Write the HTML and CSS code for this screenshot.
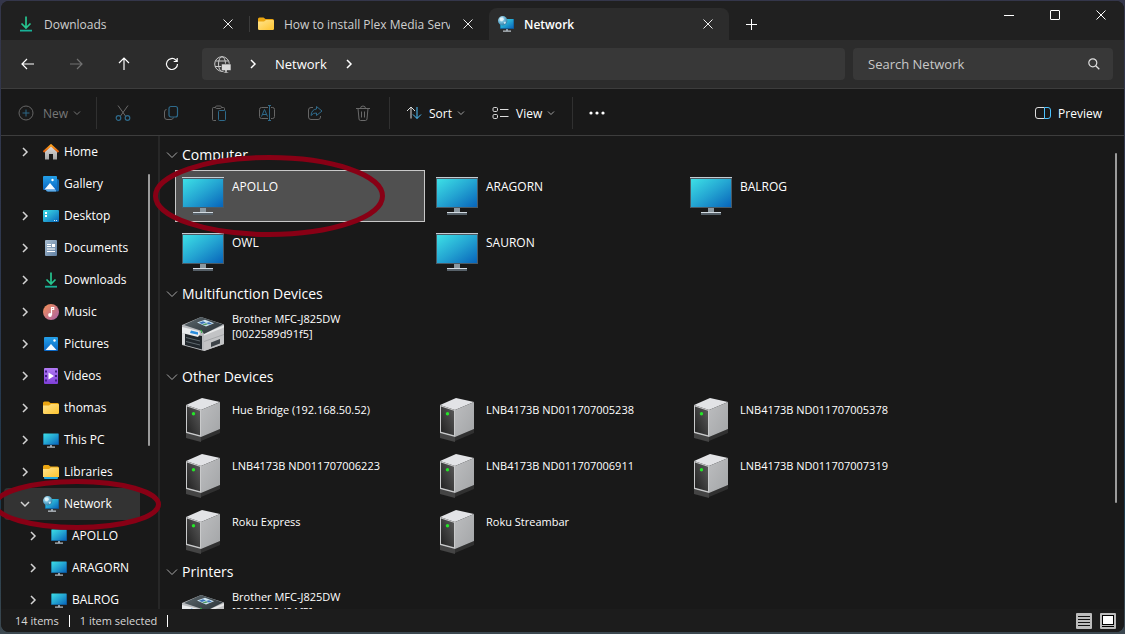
FILE: index.html
```html
<!DOCTYPE html>
<html lang="en">
<head>
<meta charset="utf-8">
<title>Network</title>
<link rel="stylesheet" href="styles.css">
</head>
<body>
<svg class="defs" aria-hidden="true">
  <defs>
    <linearGradient id="screen" x1="0" y1="0" x2="1" y2="1"><stop offset="0" stop-color="#3de0e6"/><stop offset=".5" stop-color="#24a5d2"/><stop offset="1" stop-color="#0864ba"/></linearGradient>
    <linearGradient id="gold" x1="0" y1="0" x2="1" y2="1"><stop offset="0" stop-color="#ffe48e"/><stop offset="1" stop-color="#fec42f"/></linearGradient>
    <linearGradient id="blue" x1="0" y1="0" x2="0" y2="1"><stop offset="0" stop-color="#24a0e8"/><stop offset="1" stop-color="#0a66c4"/></linearGradient>
    <linearGradient id="doc" x1="0" y1="0" x2="1" y2="1"><stop offset="0" stop-color="#a9bdd0"/><stop offset="1" stop-color="#5f7fa2"/></linearGradient>
    <linearGradient id="wall" x1="0" y1="0" x2="0" y2="1"><stop offset="0" stop-color="#e2e2e2"/><stop offset="1" stop-color="#a5a5a5"/></linearGradient>
    <linearGradient id="roof" x1="0" y1="0" x2="0" y2="1"><stop offset="0" stop-color="#ffa31f"/><stop offset="1" stop-color="#dc5a0c"/></linearGradient>
    <linearGradient id="disc" x1="0" y1="0" x2="1" y2="1"><stop offset="0" stop-color="#f49255"/><stop offset="1" stop-color="#a95fa8"/></linearGradient>
    <linearGradient id="film" x1="0" y1="0" x2="0" y2="1"><stop offset="0" stop-color="#b27af5"/><stop offset="1" stop-color="#7f3fd8"/></linearGradient>
    <radialGradient id="globe" cx=".35" cy=".3" r=".8"><stop offset="0" stop-color="#d5f1fa"/><stop offset=".5" stop-color="#69b3d4"/><stop offset="1" stop-color="#28719c"/></radialGradient>
    <linearGradient id="front" x1="0" y1="1" x2="1" y2="0"><stop offset="0" stop-color="#202020"/><stop offset="1" stop-color="#5b5b5b"/></linearGradient>
    <linearGradient id="side" x1="0" y1="0" x2="1" y2="1"><stop offset="0" stop-color="#bcbdbf"/><stop offset="1" stop-color="#a3a5a7"/></linearGradient>
    <linearGradient id="lid" x1="0" y1="0" x2="1" y2="1"><stop offset="0" stop-color="#5d686e"/><stop offset="1" stop-color="#262e33"/></linearGradient>
  </defs>
  <symbol id="i-x" viewBox="0 0 10 10"><path d="M.5.5l9 9M9.500.5l-9 9" stroke="currentColor" fill="none"/></symbol>
  <symbol id="i-chev-r" viewBox="0 0 8 10"><path d="M2 1l4 4-4 4" stroke="currentColor" stroke-width="1.500" fill="none"/></symbol>
  <symbol id="i-chev-d" viewBox="0 0 10 8"><path d="M1 2l4 4 4-4" stroke="currentColor" stroke-width="1.500" fill="none"/></symbol>
  <symbol id="i-chev-s" viewBox="0 0 8 6"><path d="M1 1.500l3 3 3-3" stroke="currentColor" fill="none"/></symbol>
  <symbol id="i-chev-g" viewBox="0 0 12 8"><path d="M1 1.500l5 5 5-5" stroke="currentColor" fill="none"/></symbol>
  <symbol id="i-down" viewBox="0 0 16 16"><path d="M8 .5v11M3.500 7.500L8 12l4.500-4.500" stroke="#26c690" stroke-width="1.700" fill="none"/><path d="M2 14.700h12" stroke="#18b197" stroke-width="1.800"/></symbol>
  <symbol id="i-folder" viewBox="0 0 16 16"><path d="M0 3q0-1.500 1.500-1.500h4L7.500 3H14.500Q16 3 16 4.500V8H0z" fill="#eaa511"/><path d="M0 5.500h6L8 4h6.700Q16 4 16 5.300v7.400q0 1.300-1.300 1.300H1.300Q0 14 0 12.700z" fill="url(#gold)"/></symbol>
  <symbol id="i-lib" viewBox="0 0 16 16"><path d="M0 2.500Q0 1 1.500 1h4L7.500 2.500H14.500Q16 2.500 16 4v3H0z" fill="#eaa511"/><path d="M0 5h6l2-1.500h6.700Q16 3.500 16 4.800V13H0z" fill="url(#gold)"/><path d="M1 13h14v1q0 1-1 1H2q-1 0-1-1z" fill="#22a5e0"/></symbol>
  <symbol id="i-pc" viewBox="0 0 16 16"><path d="M0 2h16v11H0z" fill="#147"/><path d="M.5 1.500h15v11H.5z" fill="url(#screen)"/><path d="M7 13h2v2H7z" fill="#8b98a4"/><path d="M4 14.500h8v1.200H4z" fill="#bcc4ca"/></symbol>
  <symbol id="i-net" viewBox="0 0 16 16"><path d="M2 3h14v10H2z" fill="#124f83"/><path d="M2.500 3h13v9.300h-13z" fill="url(#screen)"/><path d="M8 13h2v2H8z" fill="#8b98a4"/><path d="M5 14.500h8v1.300H5z" fill="#bcc4ca"/><circle cx="4.700" cy="4.700" r="4.700" fill="url(#globe)"/><path d="M2 2l3-.5 1 2-2 2-2-1zM5.500 6l2-.5.500 1.500-1.500 1.200z" fill="#eefafd" opacity=".75"/></symbol>
  <symbol id="i-home" viewBox="0 0 16 16"><path d="M2 7l6-6 6 6v8.500h-4V10H6v5.500H2z" fill="url(#wall)"/><path d="M.5 8L8 1.200 15.500 8" stroke="url(#roof)" stroke-width="2" fill="none"/></symbol>
  <symbol id="i-gallery" viewBox="0 0 16 16"><path d="M4 3h10.500q1.500 0 1.500 1.500V14q0 1.500-1.500 1.500H5Q3 15.500 3 14z" fill="#1468ae"/><path d="M3 13h10v2.500H5q-2 0-2-2z" fill="#5fabe6"/><rect width="14" height="14" rx="1" fill="url(#blue)"/><path d="M1.500 13.500L7 7l5.500 6.500z" fill="#f4faff"/><circle cx="9.500" cy="4" r="1.200" fill="#fff"/></symbol>
  <symbol id="i-desk" viewBox="0 0 16 16"><rect y="2" width="16" height="12" rx="1" fill="url(#screen)"/><path d="M2 4h2v2H2zM2 7h2v2H2z" fill="#fff"/><path d="M11 12h1v1h-1zM13 12h1v1h-1z" fill="#d8f3ff"/></symbol>
  <symbol id="i-doc" viewBox="0 0 16 16"><rect x="2" y="0" width="12" height="16" rx="1" fill="url(#doc)"/><path d="M4 4.500h4M4 6.500h4M4 9h8M4 11.500h8" stroke="#fff" stroke-width="1.200"/><path d="M9 4h3v3H9z" fill="#fff"/></symbol>
  <symbol id="i-music" viewBox="0 0 16 16"><circle cx="8" cy="8" r="8" fill="url(#disc)"/><path d="M8.500 11V3.500h2.200v2H8.500" stroke="#fff" stroke-width="1.200" fill="none"/><circle cx="7" cy="11" r="1.900" fill="#fff"/></symbol>
  <symbol id="i-pic" viewBox="0 0 16 16"><rect x="1" y="1" width="14" height="14" rx="1" fill="url(#blue)"/><path d="M2.500 14L8 8l5.500 6z" fill="#f4faff"/><circle cx="11.500" cy="4.500" r="1.200" fill="#fff"/></symbol>
  <symbol id="i-video" viewBox="0 0 16 16"><rect x="1" y="0" width="14" height="16" rx="1" fill="url(#film)"/><path d="M3 2.500v11.500M13 2.500v11.500" stroke="#42208a" stroke-width="2" stroke-dasharray="2 2.500"/><path d="M5.500 4.500l5.500 3.500-5.500 3.500z" fill="#fff"/></symbol>
  <symbol id="i-monitor" viewBox="0 0 42 42"><path d="M0 3h42v31H0z" fill="#4b5a64"/><path d="M0 3h42v1H0z" fill="#c4ccd3"/><path d="M1 5h40v28H1z" fill="url(#screen)"/><path d="M18 34h6v4h-6z" fill="#8b979f"/><path d="M11 38h20v1H11z" fill="#d2dbe2"/><path d="M11 39h20v2H11z" fill="#566068"/></symbol>
  <symbol id="i-server" viewBox="0 0 42 46"><path d="M4 37l15 4v5L4 42z" fill="#444"/><path d="M19 41l19-8v4l-19 8z" fill="#303030"/><path d="M4 9L20 2l18 4-19 8z" fill="#e2e3e6"/><path d="M19 14L38 6v27l-19 8z" fill="url(#side)"/><path d="M4 9l15 5v27L4 37z" fill="#c9cacb"/><path d="M5 10.500l13 4.300v24.500L5 35.800z" fill="url(#front)"/><circle cx="11.500" cy="17.700" r="1.700" fill="#25e628"/></symbol>
  <symbol id="i-printer" viewBox="0 0 42 42">
    <path d="M0 12L19 4l23 7.500V31l-20 7L0 32z" fill="#b9bbbe"/>
    <path d="M22 20.500l20-8V31l-20 7z" fill="#c2c3c5"/>
    <path d="M22 20.500l20-8v2l-20 8z" fill="#e6e7e8"/>
    <path d="M22 28.500l20-7" stroke="#9a9c9f" stroke-width=".7"/>
    <path d="M2 12L19 4l22 7.500L22 21l-2-3z" fill="url(#lid)"/>
    <path d="M15 9.500l8-2.800 9 3.500-8 3.300z" fill="#cfe6f2"/>
    <path d="M17 9.700l4-1.500 3 1.200-4 1.500zM24 10l3-.8 3 1.200-3 1z" fill="#3c73b8"/>
    <path d="M20 11.500l4-1.200 2 1-3 1z" fill="#4d9a68"/>
    <path d="M3 20l17 3v13.500L3 32z" fill="#20262b"/>
    <path d="M4 24.500l14 3.500M4 28.500l14 3.500" stroke="#5f696f"/>
    <path d="M0 14l17 4 1 3-2 3L0 20z" fill="#e9ebed"/>
    <path d="M9 17.500l7 1.700v2.500L8 20z" fill="#2a8cdd"/>
    <path d="M18 17l2 1-.5 2" stroke="#2fae43" fill="none"/>
    <path d="M0 20l3 .7V32l-3-.8z" fill="#d9dadc"/>
    <path d="M29 29.500l9-3.500v4.500l-9 3.500z" fill="#3d4348"/>
  </symbol>
</svg>

<div class="window">
  <header class="titlebar">
    <div class="tabs" role="tablist">
      <div class="tab">
        <svg class="ic16"><use href="#i-down"/></svg>
        <span class="tab-title" role="tab">Downloads</span>
        <button class="tab-close" aria-label="Close tab"><svg class="ic10"><use href="#i-x"/></svg></button>
      </div>
      <div class="tab tab-divided">
        <svg class="ic16"><use href="#i-folder"/></svg>
        <span class="tab-title" role="tab">How to install Plex Media Server</span>
        <button class="tab-close" aria-label="Close tab"><svg class="ic10"><use href="#i-x"/></svg></button>
      </div>
      <div class="tab tab-active">
        <svg class="ic16"><use href="#i-net"/></svg>
        <span class="tab-title" role="tab" aria-selected="true">Network</span>
        <button class="tab-close" aria-label="Close tab"><svg class="ic10"><use href="#i-x"/></svg></button>
      </div>
      <button class="tab-new" aria-label="New tab"><svg width="11" height="11"><path d="M5.500 0v11M0 5.500h11" stroke="currentColor"/></svg></button>
    </div>
    <div class="controls">
      <button aria-label="Minimize"><svg width="10" height="10"><path d="M0 5.500h10" stroke="currentColor"/></svg></button>
      <button aria-label="Maximize"><svg width="10" height="10"><rect x=".5" y=".5" width="9" height="9" rx=".5" fill="none" stroke="currentColor"/></svg></button>
      <button aria-label="Close"><svg class="ic10"><use href="#i-x"/></svg></button>
    </div>
  </header>

  <div class="navbar">
    <div class="nav-buttons">
      <button aria-label="Back"><svg width="14" height="12"><path d="M13 6H1M6 1L1 6l5 5" stroke="currentColor" stroke-width="1.200" fill="none"/></svg></button>
      <button aria-label="Forward" class="dim"><svg width="14" height="12"><path d="M1 6h12M8 1l5 5-5 5" stroke="currentColor" stroke-width="1.200" fill="none"/></svg></button>
      <button aria-label="Up"><svg width="12" height="14"><path d="M6 13V1M1 6l5-5 5 5" stroke="currentColor" stroke-width="1.200" fill="none"/></svg></button>
      <button aria-label="Refresh"><svg width="14" height="14"><path d="M12.500 7A5.500 5.500 0 1 1 10.800 3L12 4.200M12.200 1v3.500H8.700" stroke="currentColor" stroke-width="1.200" fill="none"/></svg></button>
    </div>
    <div class="address">
      <svg width="17" height="17" class="globe"><g fill="none" stroke="currentColor"><circle cx="8" cy="8" r="7.300"/><ellipse cx="8" cy="8" rx="3.500" ry="7.300"/><path d="M1.500 5h13M1 10.500h7"/></g><path d="M7.500 8h9.500v6.500H13V16h1.500v1h-5v-1H11v-1.500H7.500z" fill="#dadada" stroke="#383838" stroke-width=".6"/></svg>
      <svg class="chev"><use href="#i-chev-r"/></svg>
      <button class="crumb">Network</button>
      <svg class="chev"><use href="#i-chev-r"/></svg>
    </div>
    <label class="search">
      <input type="text" placeholder="Search Network" aria-label="Search Network">
      <svg width="12" height="12"><circle cx="4.800" cy="4.800" r="4" fill="none" stroke="currentColor" stroke-width="1.200"/><path d="M7.700 7.700l3.600 3.600" stroke="currentColor" stroke-width="1.300"/></svg>
    </label>
  </div>

  <div class="toolbar">
    <button class="tool tool-new" disabled>
      <svg width="16" height="16" fill="none"><circle cx="8" cy="8" r="7" stroke="#666"/><path d="M8 4.500v7M4.500 8h7" stroke="#2d6685"/></svg>
      <span>New</span><svg class="chev-s"><use href="#i-chev-s"/></svg>
    </button>
    <i class="sep"></i>
    <div class="tool-group">
      <button aria-label="Cut" disabled><svg width="16" height="16" fill="none"><path d="M3 .5l7.500 10.500M13 .5L5.500 11" stroke="#6a6a6a"/><g stroke="#2e6a8b" stroke-width="1.200"><circle cx="3.500" cy="13" r="2.300"/><circle cx="12.500" cy="13" r="2.300"/></g></svg></button>
      <button aria-label="Copy" disabled><svg width="16" height="16" fill="none"><path d="M3.500 4.500Q1.500 4.500 1.500 7v5q0 2.500 2.500 2.500h4q2 0 2.500-2" stroke="#666"/><rect x="6" y="1.500" width="8.500" height="10.500" rx="2" stroke="#2e6a8b" stroke-width="1.200"/></svg></button>
      <button aria-label="Paste" disabled><svg width="16" height="16" fill="none"><path d="M5 15.500H2.500q-1 0-1-1v-11q0-1 1-1H4.500M10.500 2.500h2q1 0 1 1V5" stroke="#666"/><rect x="4.500" y="1" width="6" height="2.500" rx="1.200" stroke="#666"/><rect x="7.500" y="5.500" width="7" height="10" rx="1" stroke="#2e6a8b"/></svg></button>
      <button aria-label="Rename" disabled><svg width="18" height="16" fill="none"><path d="M10 2.500H3.500q-2 0-2 2v7q0 2 2 2H10M13 2.500h1.500q2 0 2 2v7q0 2-2 2H13" stroke="#666"/><path d="M3.500 11.500l3-7 3 7M4.500 9.500h4M11.500 1v14M10 .5h3M10 15.500h3" stroke="#2e6a8b"/></svg></button>
      <button aria-label="Share" disabled><svg width="16" height="16" fill="none"><path d="M6 2.500H4q-2.500 0-2.500 2.500v7q0 2.500 2.500 2.500h7q2.500 0 2.500-2.500v-1" stroke="#666"/><path d="M9.500 1.500l5.500 4.500-5.500 4.500V8Q6.500 7.500 4 10.500 4.500 4.500 9.500 4z" stroke="#2e6a8b" stroke-linejoin="round"/></svg></button>
      <button aria-label="Delete" disabled><svg width="16" height="16" fill="none"><path d="M1 3.500h14M3 3.500l1 10.500q.2 1.500 1.500 1.500h5q1.300 0 1.500-1.500l1-10.500M5.500 3.500Q5.500 1 8 1t2.500 2.500M6.500 6.500v6M9.500 6.500v6" stroke="#6a6a6a"/></svg></button>
    </div>
    <i class="sep"></i>
    <button class="tool tool-sort">
      <svg width="16" height="16" fill="none"><path d="M5 13.500V2M1 6l4-4 4 4" stroke="#ddd"/><path d="M11 2v11.500M7 9.500l4 4 4-4" stroke="#4cc2ff"/></svg>
      <span>Sort</span><svg class="chev-s"><use href="#i-chev-s"/></svg>
    </button>
    <button class="tool tool-view">
      <svg width="17" height="14" fill="none" stroke="#ddd"><rect x="1" y="1.500" width="4.500" height="4" rx="1.200"/><rect x="1" y="8.500" width="4.500" height="4" rx="1.200"/><path d="M8 3.500h8.500M8 10.500h8.500"/></svg>
      <span>View</span><svg class="chev-s"><use href="#i-chev-s"/></svg>
    </button>
    <i class="sep"></i>
    <button class="more" aria-label="See more"><svg width="18" height="4" fill="#fff"><circle cx="3" cy="2" r="1.600"/><circle cx="9" cy="2" r="1.600"/><circle cx="15" cy="2" r="1.600"/></svg></button>
    <button class="tool tool-preview">
      <svg width="16" height="12" fill="none"><path d="M9.500.5H3Q.5.500.5 3v6q0 2.500 2.500 2.500h6.500" stroke="#ddd"/><path d="M9.500.5H13q2.500 0 2.500 2.500v6q0 2.500-2.500 2.500H9.500z" stroke="#4cc2ff"/></svg>
      <span>Preview</span>
    </button>
  </div>

  <div class="content">
    <nav class="sidebar" aria-label="Folders">
      <ul class="tree">
        <li><button class="node"><svg class="arrow"><use href="#i-chev-r"/></svg><svg class="ic16"><use href="#i-home"/></svg><span>Home</span></button></li>
        <li><button class="node"><svg class="arrow"></svg><svg class="ic16"><use href="#i-gallery"/></svg><span>Gallery</span></button></li>
        <li><button class="node"><svg class="arrow"><use href="#i-chev-r"/></svg><svg class="ic16"><use href="#i-desk"/></svg><span>Desktop</span></button></li>
        <li><button class="node"><svg class="arrow"><use href="#i-chev-r"/></svg><svg class="ic16"><use href="#i-doc"/></svg><span>Documents</span></button></li>
        <li><button class="node"><svg class="arrow"><use href="#i-chev-r"/></svg><svg class="ic16"><use href="#i-down"/></svg><span>Downloads</span></button></li>
        <li><button class="node"><svg class="arrow"><use href="#i-chev-r"/></svg><svg class="ic16"><use href="#i-music"/></svg><span>Music</span></button></li>
        <li><button class="node"><svg class="arrow"><use href="#i-chev-r"/></svg><svg class="ic16"><use href="#i-pic"/></svg><span>Pictures</span></button></li>
        <li><button class="node"><svg class="arrow"><use href="#i-chev-r"/></svg><svg class="ic16"><use href="#i-video"/></svg><span>Videos</span></button></li>
        <li><button class="node"><svg class="arrow"><use href="#i-chev-r"/></svg><svg class="ic16"><use href="#i-folder"/></svg><span>thomas</span></button></li>
        <li><button class="node"><svg class="arrow"><use href="#i-chev-r"/></svg><svg class="ic16"><use href="#i-pc"/></svg><span>This PC</span></button></li>
        <li><button class="node"><svg class="arrow"><use href="#i-chev-r"/></svg><svg class="ic16"><use href="#i-lib"/></svg><span>Libraries</span></button></li>
        <li><button class="node node-open"><svg class="arrow"><use href="#i-chev-d"/></svg><svg class="ic16"><use href="#i-net"/></svg><span>Network</span></button>
          <ul class="subtree">
            <li><button class="node"><svg class="arrow"><use href="#i-chev-r"/></svg><svg class="ic16"><use href="#i-pc"/></svg><span>APOLLO</span></button></li>
            <li><button class="node"><svg class="arrow"><use href="#i-chev-r"/></svg><svg class="ic16"><use href="#i-pc"/></svg><span>ARAGORN</span></button></li>
            <li><button class="node"><svg class="arrow"><use href="#i-chev-r"/></svg><svg class="ic16"><use href="#i-pc"/></svg><span>BALROG</span></button></li>
          </ul>
        </li>
      </ul>
      <div class="thumb"></div>
    </nav>

    <main class="files">
      <section>
        <h2><svg class="chev-g"><use href="#i-chev-g"/></svg>Computer</h2>
        <div class="tiles">
          <button class="tile tile-selected"><svg class="ic42"><use href="#i-monitor"/></svg><span>APOLLO</span></button>
          <button class="tile"><svg class="ic42"><use href="#i-monitor"/></svg><span>ARAGORN</span></button>
          <button class="tile"><svg class="ic42"><use href="#i-monitor"/></svg><span>BALROG</span></button>
          <button class="tile"><svg class="ic42"><use href="#i-monitor"/></svg><span>OWL</span></button>
          <button class="tile"><svg class="ic42"><use href="#i-monitor"/></svg><span>SAURON</span></button>
        </div>
      </section>
      <section>
        <h2><svg class="chev-g"><use href="#i-chev-g"/></svg>Multifunction Devices</h2>
        <div class="tiles devices">
          <button class="tile"><svg class="ic42"><use href="#i-printer"/></svg><span>Brother MFC-J825DW<br>[0022589d91f5]</span></button>
        </div>
      </section>
      <section>
        <h2><svg class="chev-g"><use href="#i-chev-g"/></svg>Other Devices</h2>
        <div class="tiles devices">
          <button class="tile"><svg class="ic42 tall"><use href="#i-server"/></svg><span>Hue Bridge (192.168.50.52)</span></button>
          <button class="tile"><svg class="ic42 tall"><use href="#i-server"/></svg><span>LNB4173B ND011707005238</span></button>
          <button class="tile"><svg class="ic42 tall"><use href="#i-server"/></svg><span>LNB4173B ND011707005378</span></button>
          <button class="tile"><svg class="ic42 tall"><use href="#i-server"/></svg><span>LNB4173B ND011707006223</span></button>
          <button class="tile"><svg class="ic42 tall"><use href="#i-server"/></svg><span>LNB4173B ND011707006911</span></button>
          <button class="tile"><svg class="ic42 tall"><use href="#i-server"/></svg><span>LNB4173B ND011707007319</span></button>
          <button class="tile"><svg class="ic42 tall"><use href="#i-server"/></svg><span>Roku Express</span></button>
          <button class="tile"><svg class="ic42 tall"><use href="#i-server"/></svg><span>Roku Streambar</span></button>
        </div>
      </section>
      <section>
        <h2><svg class="chev-g"><use href="#i-chev-g"/></svg>Printers</h2>
        <div class="tiles devices">
          <button class="tile"><svg class="ic42"><use href="#i-printer"/></svg><span>Brother MFC-J825DW<br>[0022589d91f5]</span></button>
        </div>
      </section>
      <div class="thumb"></div>
    </main>
  </div>

  <footer class="status">
    <span>14 items</span><i></i><span>1 item selected</span><i></i>
    <div class="modes">
      <button aria-label="Details view"><svg width="16" height="16"><rect width="16" height="16" rx="1" fill="#bcbcbc"/><path d="M2 3.500h12M2 6.500h12M2 9.500h12M2 12.500h12" stroke="#111"/></svg></button>
      <button aria-label="Large icons view"><svg width="16" height="16"><rect width="16" height="16" rx="1" fill="#bcbcbc"/><rect x="2.500" y="2.500" width="11" height="9" fill="#fff" stroke="#000"/><path d="M2 13.500h12" stroke="#000"/></svg></button>
    </div>
  </footer>
</div>

<svg class="marks" aria-hidden="true" fill="none" stroke="#880015" stroke-width="5">
  <ellipse cx="269" cy="196" rx="113.500" ry="38.500"/>
  <ellipse cx="77" cy="504.500" rx="81.500" ry="23"/>
</svg>
</body>
</html>
```
FILE: styles.css
```css
* { box-sizing: border-box; }
body {
  margin: 0;
  height: 100vh;
  padding: 1px 1px 2px;
  display: flex;
  overflow: hidden;
  background: linear-gradient(180deg, #34364a, #2d3950 50%, #1d3a4c 80%, #3c4850);
  color: #fff;
  font-family: "Open Sans", "Noto Sans", sans-serif;
  font-size: 12px;
}
button {
  margin: 0;
  padding: 0;
  border: 0;
  background: none;
  color: inherit;
  font: inherit;
  text-align: left;
  display: flex;
  align-items: center;
}
svg { display: block; flex: none; }
ul { margin: 0; padding: 0; list-style: none; }
.defs { position: absolute; width: 0; height: 0; }
.ic10 { width: 10px; height: 10px; }
.ic16 { width: 16px; height: 16px; }

.window {
  flex: 1;
  min-width: 0;
  display: flex;
  flex-direction: column;
  overflow: hidden;
  border-radius: 8px;
  background: #191919;
}

.titlebar {
  flex: none;
  height: 39px;
  display: flex;
  justify-content: space-between;
  background: #202020;
}
.tabs { display: flex; padding: 7px 0 0 8px; min-width: 0; }
.tab {
  width: 240px;
  display: flex;
  align-items: center;
  gap: 10px;
  padding: 0 16px 0 9px;
  color: #cfcfcf;
}
.tab-divided { background: linear-gradient(#3b3b3b, #3b3b3b) 0 50% / 1px 16px no-repeat; }
.tab-title { flex: 1; overflow: hidden; white-space: nowrap; }
.tab-close { width: 10px; margin-left: 3px; color: #eee; }
.tab-active {
  background: #2c2c2c;
  border-radius: 8px 8px 0 0;
  color: #fff;
  font-weight: 600;
}
.tab-new { width: 45px; justify-content: center; }
.controls { display: flex; height: 28px; }
.controls button { width: 46px; justify-content: center; }

.navbar {
  flex: none;
  height: 49px;
  display: flex;
  align-items: center;
  gap: 8px;
  padding: 0 11px 0 3px;
  background: #2c2c2c;
  border-bottom: 1px solid #3d3d3d;
}
.nav-buttons { display: flex; margin-right: -2px; }
.nav-buttons button { width: 48px; height: 32px; justify-content: center; }
.nav-buttons .dim { color: #717171; }
.address, .search {
  height: 32px;
  display: flex;
  align-items: center;
  border-radius: 4px;
  background: #383838;
}
.address { flex: 1; padding-left: 12px; gap: 18px; }
.address .chev { width: 8px; height: 10px; }
.globe { color: #c8c8c8; }
.crumb { font-size: 13px; }
.search { width: 260px; padding: 0 13px 0 15px; color: #ddd; }
.search input {
  flex: 1;
  min-width: 0;
  padding: 0;
  border: 0;
  outline: 0;
  background: none;
  color: #fff;
  font: inherit;
  font-size: 13px;
}
.search input::placeholder { color: #c8c8c8; opacity: 1; }

.toolbar {
  flex: none;
  height: 47px;
  display: flex;
  align-items: center;
  padding: 2px 22px 0 17px;
  border-bottom: 1px solid #3d3d3d;
}
.tool { gap: 7px; height: 32px; }
.chev-s { width: 8px; height: 6px; color: #a0a0a0; margin-left: -2px; }
.tool-new { width: 78px; color: #777; gap: 9px; }
.tool-new .chev-s { color: #777; margin-left: -4px; }
.sep { flex: none; width: 1px; height: 32px; background: #303030; }
.tool-group { display: flex; padding: 0 2px; }
.tool-group button { width: 48px; height: 32px; justify-content: center; }
.tool-sort { width: 86px; margin-left: 16px; }
.tool-view { width: 80px; }
.more { width: 48px; height: 32px; justify-content: center; }
.tool-preview { margin-left: auto; }

.content { flex: 1; min-height: 0; display: flex; }
.sidebar {
  position: relative;
  flex: none;
  width: 159px;
  padding-left: 3px;
  overflow: hidden;
  border-right: 2px solid #272727;
}
.node {
  width: 136px;
  height: 32px;
  padding: 0 0 2px 16px;
  border-radius: 4px;
  white-space: nowrap;
}
.node .ic16 { margin: 2px 5px 0 13px; }
.arrow { width: 10px; height: 10px; margin-top: 2px; color: #d4d4d4; }
.node-open { background: #333; }
.subtree .node { padding-left: 24px; width: 144px; }
.thumb { position: absolute; width: 2px; border-radius: 1px; background: #9b9b9b; }
.sidebar .thumb { top: 38px; right: 8px; height: 272px; }

.files {
  position: relative;
  flex: 1;
  min-width: 0;
  padding: 7px 14px 0 15px;
  overflow: hidden;
}
.files .thumb { top: 17px; right: 7px; height: 350px; }
.files h2 {
  margin: 0 0 0 -9px;
  height: 27px;
  padding-bottom: 4px;
  display: flex;
  align-items: center;
  gap: 4px;
  font-size: 14px;
  font-weight: 400;
}
.chev-g { width: 12px; height: 8px; color: #a8a8a8; }
.tiles {
  display: grid;
  grid-template-columns: repeat(auto-fill, 250px);
  gap: 4px;
  padding-bottom: 4px;
}
@media (max-width: 1300px) {
  .tiles { grid-template-columns: repeat(3, 250px); }
}
.tile {
  height: 52px;
  padding: 0 6px;
  gap: 8px;
  border: 1px solid transparent;
  align-items: flex-start;
  line-height: 15px;
}
.tile span { height: 30px; display: flex; align-items: center; }
.devices { font-size: 11px; }
.devices .tile span { height: 32px; }
.tile-selected { background: #505050; border-color: #c8c8c8; }
.ic42 { width: 42px; height: 42px; margin-top: 3px; }
.ic42.tall { height: 46px; }

.status {
  flex: none;
  height: 23px;
  display: flex;
  align-items: center;
  gap: 10px;
  padding: 0 8px 0 14px;
  background: #1c1c1c;
  color: #d8d8d8;
  font-size: 11px;
}
.status i { width: 1px; height: 12px; background: #fff; }
.modes { display: flex; gap: 8px; margin-left: auto; }

.marks {
  position: absolute;
  top: 0;
  left: 0;
  width: 100%;
  height: 100%;
  pointer-events: none;
}
```
